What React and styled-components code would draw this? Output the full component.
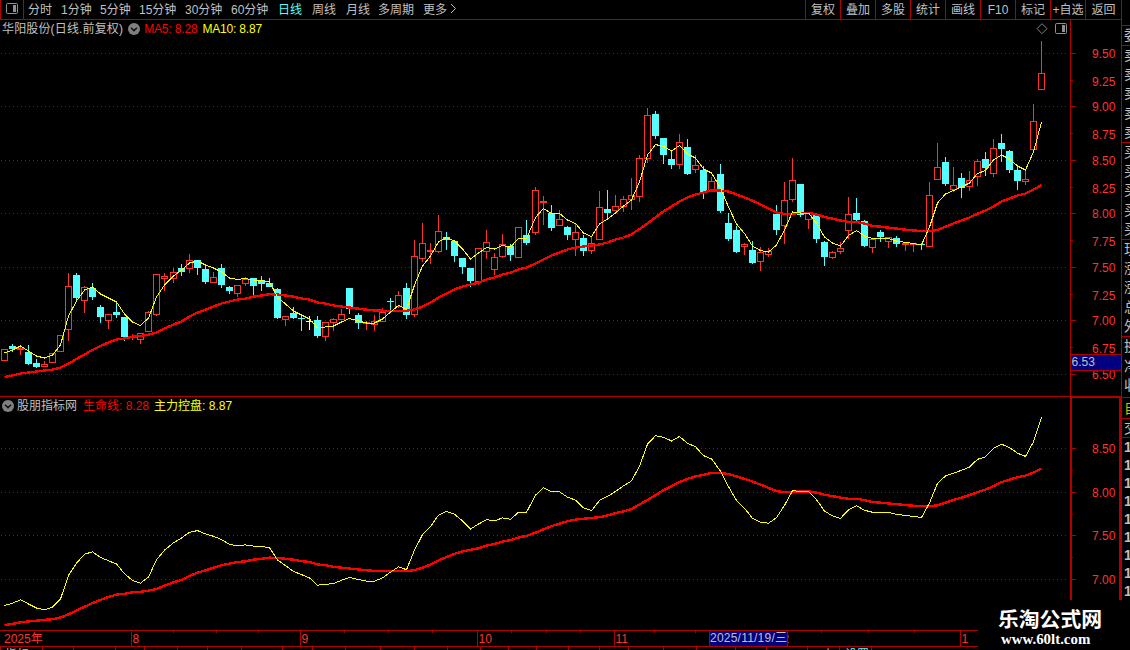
import React from "react";
import styled, { createGlobalStyle } from "styled-components";

const GlobalStyle = createGlobalStyle`
  body {
    margin: 0;
    background: #000;
    overflow: hidden;
  }
  * {
    box-sizing: border-box;
  }
`;

const LINE = "#b00000";
const UP = "#ff3232";
const DOWN = "#54ffff";
const GREY = "#c0c0c0";

const Screen = styled.div`
  position: relative;
  display: grid;
  grid-template-columns: 1121px 9px;
  width: 1130px;
  height: 650px;
  overflow: hidden;
  background: #000;
  color: ${GREY};
  font: 12px/16px "Liberation Sans", "Noto Sans CJK SC", sans-serif;
  white-space: nowrap;
`;

const Main = styled.div`
  display: flex;
  flex-direction: column;
  height: 650px;
  min-width: 0;
  overflow: hidden;
`;

const Toolbar = styled.div`
  display: flex;
  flex: none;
  height: 20px;
  border-bottom: 1px solid ${LINE};
`;

const ToggleCell = styled.div`
  width: 24px;
  padding: 3px 0 0 4px;
  border: solid ${LINE};
  border-width: 0 1px;
  line-height: 0;
`;

const Periods = styled.div`
  display: grid;
  grid-template-columns: 33px 39px 39px 46px 46px 47px 34px 34px 32px 45px 27px 10px;
  margin-left: 4px;
  line-height: 20px;
`;

const Period = styled.span`
  color: ${(p) => (p.$active ? DOWN : GREY)};
`;

const Actions = styled.div`
  display: flex;
  margin-left: auto;
`;

const Action = styled.div`
  width: ${(p) => p.$width || 35}px;
  border-left: 1px solid ${LINE};
  line-height: 20px;
  text-align: center;
`;

const Pane = styled.div`
  display: flex;
  flex: none;
  height: ${(p) => p.$height}px;
`;

const Plot = styled.div`
  display: flex;
  flex-direction: column;
  width: 1070px;
`;

const PaneHeader = styled.div`
  display: flex;
  align-items: center;
  height: 18px;
  padding-left: 2px;
`;

const Legend = styled.span`
  margin-left: ${(p) => p.$gap || 0}px;
  color: ${(p) => p.$color || GREY};
  letter-spacing: ${(p) => p.$spacing || 0}px;
`;

const LegendIcon = styled.span`
  display: flex;
  margin-left: ${(p) => p.$gap || 0}px;
`;

const HeaderTools = styled.div`
  display: flex;
  gap: 6px;
  margin-left: auto;
  padding-right: 2px;
`;

const Svg = styled.svg`
  display: block;
  flex: none;
  font: 12px "Liberation Sans", "Noto Sans CJK SC", sans-serif;
`;

const TimeAxis = styled.div`
  display: flex;
  flex: none;
  height: 20px;
`;

const Sidebar = styled.div`
  height: 600px;
  border-left: 1px solid ${LINE};
  overflow: hidden;
`;

const SideGroup = styled.div`
  height: ${(p) => p.$height}px;
  padding: 0 0 0 2px;
  border-bottom: 1px solid ${LINE};
  color: ${(p) => p.$color || GREY};
`;

const SideCell = styled.div`
  height: ${(p) => p.$height}px;
  font-size: 14px;
  font-weight: ${(p) => (p.$bold ? "bold" : "normal")};
  line-height: ${(p) => p.$height}px;
`;

const Trades = styled.div`
  padding: 0 0 0 2px;
`;

const Watermark = styled.div`
  position: absolute;
  left: 978px;
  top: 600px;
  width: 152px;
  height: 50px;
  background: #000;
  color: #fff;
`;

const SiteName = styled.div`
  padding: 7px 0 0 20px;
  font: bold 20.8px/22px "Noto Sans CJK SC", sans-serif;
`;

const SiteUrl = styled.div`
  padding: 1px 0 0 23px;
  font: bold 14.9px/18px "Liberation Serif", serif;
`;

// One row per day: kind (u = up, d = down, w = flat), high, body top, body bottom, low
const candles = `
u 349 349 361 361|d 344 346 349 352|u 346 348 350 355|d 345 352 364 365|d 359 363 367 368
u 361 364 367 367|u 353 353 363 363|u 335 335 352 352|u 273 286 330 341|d 273 275 298 302
u 286 287 301 313|d 283 288 297 300|d 305 307 317 323|u 314 314 321 329|d 302 312 315 318
d 317 317 337 341|u 334 336 338 340|u 333 333 340 344|u 311 312 332 332|u 274 274 315 316
u 273 276 279 291|u 268 272 279 283|d 264 268 272 276|u 254 260 269 273|d 260 260 268 275
d 264 269 282 284|u 272 277 283 283|d 264 268 285 288|d 286 287 291 294|u 285 285 294 297
u 277 279 284 286|d 278 278 286 295|d 276 280 284 291|d 278 283 287 287|d 288 289 318 319
u 316 316 320 326|d 307 313 318 319|d 316 318 319 331|w 316 321 322 330|d 316 320 336 338
u 322 322 337 341|u 318 319 323 331|u 309 314 320 320|d 288 288 309 314|d 313 315 323 329
u 321 322 324 330|u 315 321 325 331|u 308 312 322 322|d 298 301 302 310|u 291 295 307 308
d 283 288 315 319|u 240 256 315 317|u 223 243 259 262|u 243 250 252 264|u 215 231 252 253
d 232 237 240 250|d 241 241 256 262|d 258 258 267 274|d 268 268 281 287|u 248 248 282 285
u 230 242 252 259|u 253 257 270 275|u 234 244 257 258|d 244 246 255 261|u 227 227 258 258
d 220 235 243 245|u 187 190 233 235|u 196 201 203 225|d 205 213 228 231|u 210 219 226 226
d 226 227 235 240|u 224 232 240 256|d 235 238 251 256|u 236 243 251 254|u 191 207 240 240
d 190 209 213 219|u 195 206 211 211|u 196 199 207 212|u 178 195 200 210|u 155 158 197 202
u 108 115 159 163|d 111 114 136 139|d 138 138 155 164|d 151 159 165 169|u 134 142 165 169
d 139 147 174 175|u 155 165 170 173|d 166 170 192 199|u 177 181 191 191|d 164 174 211 213
d 213 223 239 241|d 226 230 252 253|u 243 244 247 255|d 241 250 263 264|u 247 252 262 271
u 248 251 255 257|d 205 214 230 235|u 182 200 226 244|u 158 180 200 202|d 184 184 215 217
u 213 213 220 229|d 215 215 239 243|d 241 242 257 266|u 251 252 258 259|u 242 248 252 254
u 197 214 231 239|d 198 213 220 222|d 220 221 246 247|u 239 239 248 253|d 230 232 237 242
u 237 237 242 248|d 236 238 244 247|u 242 243 245 251|u 243 243 245 252|d 243 244 245 250
u 182 195 247 247|u 143 167 180 180|d 157 162 184 186|u 167 185 190 192|d 173 178 188 198
u 171 180 187 191|u 159 161 177 186|d 152 159 168 176|u 139 148 174 177|d 134 143 149 162
d 150 151 170 173|d 167 170 181 190|u 170 179 182 185|u 104 121 150 150|u 41 73 90 90`
  .trim()
  .split(/[|\n]/)
  .map((row) => {
    const [kind, ...values] = row.trim().split(" ");
    const [high, top, bottom, low] = values.map(Number);
    return { kind, high, top, bottom, low };
  });

const fastLine = [
  353, 350, 346, 351, 356, 358, 355, 345, 316, 301, 290, 287, 294, 298, 302,
  314, 322, 325.5, 318, 297, 285, 276, 270, 263, 261, 265, 268, 272, 278, 279.5,
  278.5, 280, 280.5, 282, 297, 304, 311, 315, 319, 328, 327, 326, 322, 318.5,
  321, 323, 323, 319, 312, 305.5, 309, 285, 266, 256, 242, 237.5, 241, 249, 259,
  253, 247.5, 249, 245.5, 247, 238.5, 238.5, 217.5, 208.5, 213.5, 213.5, 220,
  223.5, 233, 236.5, 224, 219, 213, 206, 200, 182, 155, 144.5, 146.5, 151, 145.5,
  154, 158, 169, 173, 188, 207, 224, 233.5, 246, 250.5, 252, 245, 230, 212, 213,
  213, 223, 237, 243, 246, 235.5, 230.5, 236, 238.5, 238.5, 238.5, 241, 242.5,
  243.5, 245, 227, 203, 194, 190.5, 187, 183, 173.5, 170.5, 160, 155, 159, 166,
  170, 152, 122,
];

const slowLine = [
  377, 375.5, 373.5, 372.5, 371.5, 370.5, 369.7, 367.5, 363.7, 359, 354.5, 350,
  346, 342.5, 339.5, 338.5, 336.7, 336, 334.7, 332.5, 328.5, 324.5, 321.5, 316.5,
  312.7, 309.7, 306.5, 303.5, 301.5, 299.5, 298.7, 296.7, 295.5, 294.2, 294.5,
  295.5, 296.7, 298.5, 299.5, 302.5, 303.5, 305.5, 306.5, 307.5, 308.7, 309.7,
  310.5, 310.7, 310.7, 310.7, 310.7, 309.5, 306.5, 302.7, 297.5, 293.5, 289.5,
  286.5, 284.5, 282.7, 279.5, 277.5, 274.5, 272.7, 269.5, 267.5, 263.5, 259.5,
  255.5, 252.5, 249.5, 247.5, 246.5, 245.5, 244.5, 242.5, 239.5, 237.5, 234.5,
  229, 223.5, 217.5, 211.5, 206.5, 201.5, 197.5, 194.5, 192.5, 190.3, 190.5,
  191.5, 194.5, 197.5, 200.7, 204.5, 208.5, 212.5, 214, 213.7, 212.8, 212.8,
  214.5, 217, 218.7, 220.5, 222, 222, 223.5, 226, 226.7, 227.7, 228.5, 229.7,
  230.5, 231, 231, 230, 226.7, 223.5, 220.5, 217.5, 213.8, 210.5, 206.5, 201.5,
  198.5, 195.5, 193.5, 189.7, 185,
];

const xAt = (i) => Math.floor(4.07 + 8.0444 * i);
// The indicator pane has the same series on a flatter price scale
const toIndicator = (y) => 448.7 + (y - 160.5) * 0.815;
const toPoints = (values, scale = (y) => y) =>
  values.map((y, i) => `${xAt(i) + 0.5},${scale(y)}`).join(" ");

const priceTicks = [
  [53, "9.50", 58], [80, "9.25", 86], [106, "9.00", 111], [133, "8.75", 139],
  [160, "8.50", 165], [187, "8.25", 193], [213, "8.00", 218], [240, "7.75", 246],
  [267, "7.50", 272], [294, "7.25", 300], [320, "7.00", 325], [347, "6.75", 353],
  [374, "6.50", 379],
];

const indicatorTicks = [
  [448, "8.50", 453], [470], [492, "8.00", 497], [514], [535, "7.50", 540],
  [557], [579, "7.00", 584],
];

const months = [
  [131, "8"], [300, "9"], [477, "10"], [614, "11"], [960, "1"],
];
const weekTicks = [173, 216, 258, 344, 388, 432, 511, 546, 580, 654, 695, 821, 868, 914];
const tabTicks = [
  0, 42, 73, 115, 144, 177, 207, 241, 282, 312, 345, 380, 414, 447, 480, 508,
  536, 568, 599, 628, 663, 696, 735, 766, 807, 839, 871,
];

const sideGroups = [
  { height: 26, cell: 18, text: "" },
  { height: 20, cell: 19, text: "委" },
  { height: 97, cell: 19.2, text: "卖卖卖卖卖" },
  { height: 97, cell: 19.2, text: "买买买买买" },
  { height: 97, cell: 19.2, text: "现涨涨总外" },
  { height: 61, cell: 19.5, text: "换净收" },
  { height: 21, cell: 20, text: "自", color: "#c0c000" },
  { height: 19, cell: 18, text: "交" },
];

const PanelIcon = () => (
  <svg width="14" height="12" viewBox="0 0 14 12">
    <rect x="1.5" y="0.5" width="11" height="10" rx="1.2" fill="none" stroke="#909090" />
    <rect x="8" y="2" width="3" height="7" fill="#909090" />
  </svg>
);

const DiamondIcon = () => (
  <svg width="12" height="12" viewBox="0 0 12 12">
    <path d="M6 0.7L11 5.7L6 10.7L1 5.7Z" fill="none" stroke="#808080" />
  </svg>
);

const RoundChevron = () => (
  <svg width="12" height="12" viewBox="0 0 12 12">
    <circle cx="6" cy="6" r="6" fill="#808080" />
    <path d="M3 4.7L6 7.6L9 4.7" fill="none" stroke="#101010" strokeWidth="1.5" />
  </svg>
);

const GridLines = ({ rows }) =>
  rows.map((y) => (
    <line
      key={y}
      x1="1"
      x2="1068"
      y1={y + 0.5}
      y2={y + 0.5}
      stroke={LINE}
      strokeDasharray="1 3"
    />
  ));

const Candle = ({ x, kind, high, top, bottom, low }) => {
  const color = kind === "u" ? UP : kind === "d" ? DOWN : "#ffffff";
  const hollow = kind === "u" && bottom - top > 2;
  return (
    <g fill={color}>
      <rect x={x} y={high} width="1" height={low - high} />
      <rect x={x - 3} y={top} width="7" height={bottom - top} />
      {hollow && (
        <rect x={x - 2} y={top + 1} width="5" height={bottom - top - 2} fill="#000" />
      )}
    </g>
  );
};

const PriceScale = ({ y, height, ticks, children }) => (
  <Svg width="51" height={height} viewBox={`1070 ${y} 51 ${height}`} shapeRendering="crispEdges">
    {ticks.map(([tickY, label, baseline], i) => (
      <g key={tickY}>
        <rect x="1071" y={tickY} width={i % 2 ? 2 : 5} height="1" fill={LINE} />
        {label && (
          <text x="1092" y={baseline} fill={UP}>
            {label}
          </text>
        )}
      </g>
    ))}
    {children}
  </Svg>
);

const App = () => {
  const periods = [
    "分时", "1分钟", "5分钟", "15分钟", "30分钟", "60分钟", "日线", "周线",
    "月线", "多周期", "更多",
  ];
  const actions = ["复权", "叠加", "多股", "统计", "画线", "F10", "标记", "+自选"];

  return (
    <>
      <GlobalStyle />
      <Screen>
        <Main>
          <Toolbar>
            <ToggleCell>
              <PanelIcon />
            </ToggleCell>
            <Periods>
              {periods.map((name) => (
                <Period key={name} $active={name === "日线"}>
                  {name}
                </Period>
              ))}
              <svg width="8" height="18" viewBox="0 0 8 18">
                <path d="M1 4L5.5 8.5L1 13" fill="none" stroke={GREY} />
              </svg>
            </Periods>
            <Actions>
              {actions.map((name) => (
                <Action key={name}>{name}</Action>
              ))}
              <Action $width={36}>返回</Action>
            </Actions>
          </Toolbar>

          <Pane $height={376}>
            <Plot>
              <PaneHeader>
                <Legend $spacing={0.15}>华阳股份(日线.前复权)</Legend>
                <LegendIcon $gap={5}>
                  <RoundChevron />
                </LegendIcon>
                <Legend $gap={4} $color="#ff0000" $spacing={-0.15}>
                  MA5: 8.28
                </Legend>
                <Legend $gap={5} $color="#ffff00" $spacing={-0.2}>
                  MA10: 8.87
                </Legend>
                <HeaderTools>
                  <DiamondIcon />
                  <PanelIcon />
                </HeaderTools>
              </PaneHeader>
              <Svg width="1070" height="358" viewBox="0 38 1070 358" shapeRendering="crispEdges">
                <GridLines rows={[53, 106, 160, 213, 267, 320, 374]} />
                {candles.map((candle, i) => (
                  <Candle key={i} x={xAt(i)} {...candle} />
                ))}
                <polyline points={toPoints(slowLine)} fill="none" stroke="#ff0000" strokeWidth="2.4" />
                <polyline points={toPoints(fastLine)} fill="none" stroke="#ffff00" />
              </Svg>
            </Plot>
            <PriceScale y={20} height={376} ticks={priceTicks}>
              <rect x="1070" y="20" width="1" height="376" fill={LINE} />
              <rect x="1070.5" y="354.5" width="51" height="16" fill="#000080" stroke={LINE} />
              <text x="1071.5" y="366" fill={GREY}>
                6.53
              </text>
            </PriceScale>
          </Pane>

          <Pane $height={234}>
            <Plot>
              <Svg width="1070" height="1" viewBox="0 0 1070 1">
                <rect width="1070" height="1" fill={LINE} />
              </Svg>
              <PaneHeader>
                <LegendIcon>
                  <RoundChevron />
                </LegendIcon>
                <Legend $gap={3}>股朋指标网</Legend>
                <Legend $gap={6} $color="#ff0000">
                  生命线: 8.28
                </Legend>
                <Legend $gap={5} $color="#ffff00">
                  主力控盘: 8.87
                </Legend>
              </PaneHeader>
              <Svg width="1070" height="215" viewBox="0 415 1070 215" shapeRendering="crispEdges">
                <GridLines rows={[448, 492, 535, 579]} />
                <polyline
                  points={toPoints(slowLine, toIndicator)}
                  fill="none"
                  stroke="#ff0000"
                  strokeWidth="2.4"
                />
                <polyline points={toPoints(fastLine, toIndicator)} fill="none" stroke="#ffff00" />
              </Svg>
            </Plot>
            <PriceScale y={396} height={234} ticks={indicatorTicks}>
              <path d="M1071 600V397H1120V600" fill="none" stroke={LINE} strokeWidth="2" />
            </PriceScale>
          </Pane>

          <TimeAxis>
            <Svg width="978" height="20" viewBox="0 630 978 20" shapeRendering="crispEdges">
              <rect x="0" y="630" width="978" height="1" fill={LINE} />
              <rect x="0" y="646" width="978" height="1" fill={LINE} />
              {weekTicks.map((x) => (
                <rect key={x} x={x} y="631" width="1" height="2" fill={LINE} />
              ))}
              {tabTicks.map((x) => (
                <rect key={x} x={x} y="647" width="1" height="3" fill={LINE} />
              ))}
              <text x="4" y="643" fill={UP}>
                2025年
              </text>
              {months.map(([x, label]) => (
                <g key={x}>
                  <rect x={x} y="630" width="1" height="16" fill={LINE} />
                  <text x={x + 1.5} y="643" fill={UP}>
                    {label}
                  </text>
                </g>
              ))}
              <text x="782.5" y="643" fill={UP}>
                2
              </text>
              <rect x="709.5" y="630.5" width="78" height="16" fill="#000080" stroke={LINE} />
              <text x="710" y="642" fill={GREY} textLength="77">
                2025/11/19/三
              </text>
              {/* tab strip, only its top edge is on screen */}
              <text x="5" y="658.5" fill={GREY}>
                指标
              </text>
              <text x="822" y="658.5" fill={GREY}>
                小
              </text>
              <text x="845" y="658.5" fill={DOWN}>
                设置
              </text>
            </Svg>
          </TimeAxis>
        </Main>

        <Sidebar>
          {sideGroups.map((group, i) => (
            <SideGroup key={i} $height={group.height} $color={group.color}>
              {[...group.text].map((t, j) => (
                <SideCell key={j} $height={group.cell}>
                  {t}
                </SideCell>
              ))}
            </SideGroup>
          ))}
          <Trades>
            {[..."111111111"].map((t, i) => (
              <SideCell key={i} $height={18} $bold>
                {t}
              </SideCell>
            ))}
          </Trades>
        </Sidebar>

        <Watermark>
          <SiteName>乐淘公式网</SiteName>
          <SiteUrl>www.60lt.com</SiteUrl>
        </Watermark>
      </Screen>
    </>
  );
};

export default App;
